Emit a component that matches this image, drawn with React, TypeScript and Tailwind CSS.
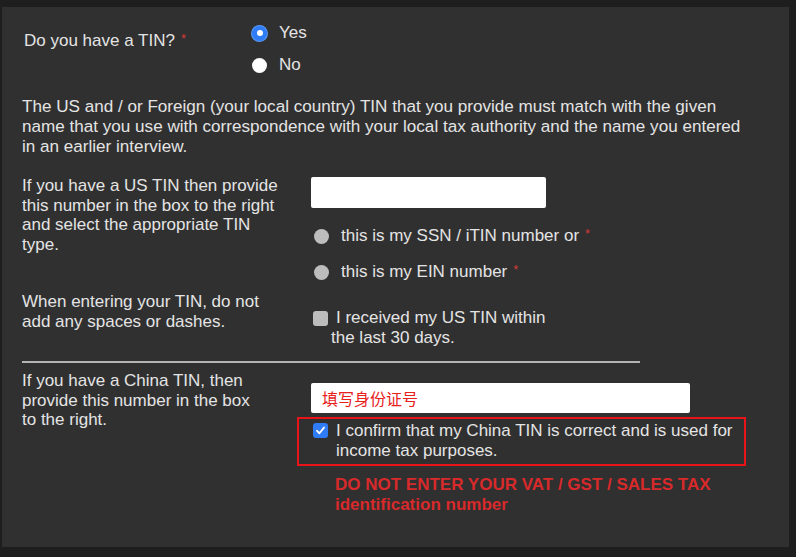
const FONT = { fontFamily: '"Liberation Sans", Arial, "Noto Sans CJK SC", sans-serif' };

function Req() {
  return <span className="relative -top-[3px] ml-[6px] text-[13px] leading-none text-[#d23a3a]">*</span>;
}

function Radio({ state }: { state: "on" | "off" | "dim" }) {
  if (state === "on") {
    return (
      <span className="flex h-[15px] w-[15px] items-center justify-center rounded-full bg-[#2f7cf6] ring-1 ring-[#5b9bf8]">
        <span className="h-[6px] w-[6px] rounded-full bg-white" />
      </span>
    );
  }
  return (
    <span
      className={`block h-[15px] w-[15px] rounded-full ${state === "off" ? "bg-white" : "bg-[#bdbdbd]"}`}
    />
  );
}

function Check({ checked }: { checked?: boolean }) {
  if (checked) {
    return (
      <span className="flex h-[15px] w-[15px] shrink-0 items-center justify-center rounded-[3px] bg-[#2f7cf6]">
        <svg viewBox="0 0 12 12" className="h-[11px] w-[11px]">
          <path d="M2.2 6.3 4.8 9 9.8 2.8" fill="none" stroke="white" strokeWidth="2" strokeLinecap="round" strokeLinejoin="round" />
        </svg>
      </span>
    );
  }
  return <span className="block h-[15px] w-[15px] shrink-0 rounded-[3px] bg-[#bdbdbd]" />;
}

export default function App() {
  return (
    <div className="min-h-screen bg-[#1e1e1e] pl-[2px] pr-[7px] pt-[7px]" style={FONT}>
      <div className="h-[540px] bg-[#303030] pl-[20px] pt-[16px] text-[17px] text-[#e4e4e4]">
        {/* TIN question */}
        <div className="flex">
          <div className="mt-[8px] w-[230px] pl-[2px] leading-[20px]">
            Do you have a TIN?
            <Req />
          </div>
          <div className="flex flex-col gap-[12px]">
            <div className="flex h-[20px] items-center gap-[12px]">
              <Radio state="on" />
              <span>Yes</span>
            </div>
            <div className="flex h-[20px] items-center gap-[12px]">
              <Radio state="off" />
              <span>No</span>
            </div>
          </div>
        </div>

        <p className="mt-[22px] text-[17.1px] leading-[20px]">
          The US and / or Foreign (your local country) TIN that you provide must match with the given
          <br />
          name that you use with correspondence with your local tax authority and the name you entered
          <br />
          in an earlier interview.
        </p>

        {/* US TIN */}
        <div className="mt-[19px] flex">
          <div className="w-[289px] leading-[19.5px]">
            <p>
              If you have a US TIN then provide
              <br />
              this number in the box to the right
              <br />
              and select the appropriate TIN
              <br />
              type.
            </p>
            <p className="mt-[38px]">
              When entering your TIN, do not
              <br />
              add any spaces or dashes.
            </p>
          </div>
          <div className="flex flex-col pt-px">
            <div className="h-[31px] w-[235px] rounded-[2px] bg-white" />
            <div className="ml-[3px] mt-[18px] flex h-[20px] items-center gap-[12px]">
              <Radio state="dim" />
              <span>
                this is my SSN / iTIN number or
                <Req />
              </span>
            </div>
            <div className="ml-[3px] mt-[16px] flex h-[20px] items-center gap-[12px]">
              <Radio state="dim" />
              <span>
                this is my EIN number
                <Req />
              </span>
            </div>
            <div className="ml-[2px] mt-[26px] leading-[20px]">
              <div className="flex items-center gap-[8px]">
                <Check />
                <span>I received my US TIN within</span>
              </div>
              <div className="pl-[18px]">the last 30 days.</div>
            </div>
          </div>
        </div>

        <div className="mt-[13px] h-[2px] w-[618px] bg-[#b4b4b4]" />

        {/* China TIN */}
        <div className="mt-[8px] flex">
          <p className="w-[289px] leading-[19.5px]">
            If you have a China TIN, then
            <br />
            provide this number in the box
            <br />
            to the right.
          </p>
          <div className="flex flex-col pt-[12px]">
            <div className="flex h-[30px] w-[379px] items-center rounded-[2px] bg-white pl-[11px]">
              <span
                className="text-[16px] text-[#e8201c]"
                style={{ fontFamily: '"Noto Sans CJK SC", sans-serif' }}
              >
                填写身份证号
              </span>
            </div>
            <div className="-ml-[14px] mt-[4px] h-[49px] w-[449px] border-2 border-[#e8141a] pl-[14px] pt-[2px] leading-[20px]">
              <div className="flex gap-[8px]">
                <span className="pt-[2px]">
                  <Check checked />
                </span>
                <span>
                  I confirm that my China TIN is correct and is used for
                  <br />
                  income tax purposes.
                </span>
              </div>
            </div>
            <p className="ml-[24px] mt-[9px] text-[17px] font-bold leading-[19.5px] text-[#d8292b]">
              DO NOT ENTER YOUR VAT / GST / SALES TAX
              <br />
              identification number
            </p>
          </div>
        </div>
      </div>
    </div>
  );
}
